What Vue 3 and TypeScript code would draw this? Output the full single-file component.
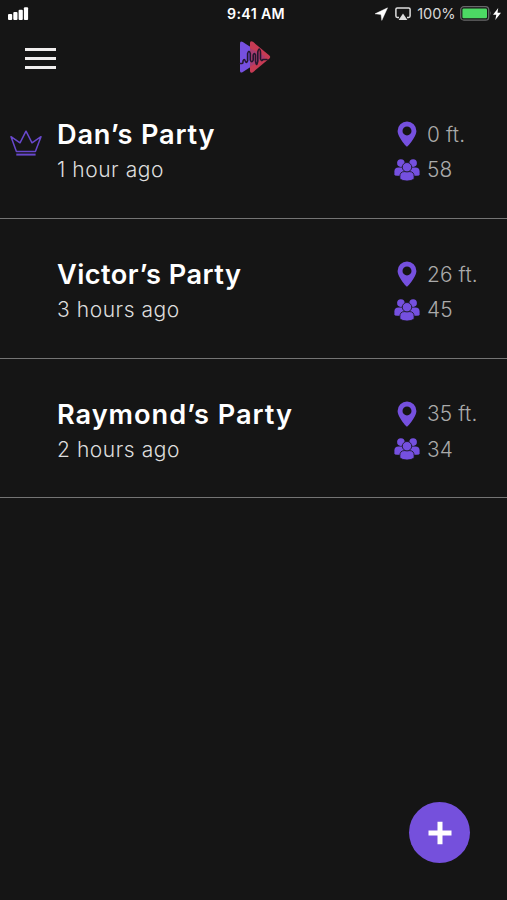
<script setup lang="ts">
interface Party {
  name: string
  age: string
  distance: string
  guests: number
  hosting: boolean
  nameSpacing: number
}

const parties: Party[] = [
  { name: 'Dan’s Party', age: '1 hour ago', distance: '0 ft.', guests: 58, hosting: true, nameSpacing: 0.8 },
  { name: 'Victor’s Party', age: '3 hours ago', distance: '26 ft.', guests: 45, hosting: false, nameSpacing: 0.45 },
  { name: 'Raymond’s Party', age: '2 hours ago', distance: '35 ft.', guests: 34, hosting: false, nameSpacing: 0.95 },
]
</script>

<template>
  <div class="screen">
    <header class="status">
      <svg class="signal" width="22" height="14" viewBox="0 0 22 14" fill="#fff">
        <rect x="0" y="7" width="4.2" height="6" rx="1" />
        <rect x="5.3" y="5" width="4.2" height="8" rx="1" />
        <rect x="10.6" y="2.8" width="4.2" height="10.2" rx="1" />
        <rect x="15.9" y="0.3" width="4.2" height="12.7" rx="1" />
      </svg>
      <span class="clock">9:41 AM</span>
      <div class="indicators">
        <svg width="14" height="14" viewBox="0 0 14 14"><path d="M12.6 .8 L0 6.8 L6 7.6 L6.8 13.4 Z" fill="#fff" stroke="#fff" stroke-width=".4" /></svg>
        <svg class="cast" width="16" height="14" viewBox="0 0 16 14">
          <path d="M4 10.4H2.3Q.9 10.4 .9 9V2.3Q.9.9 2.3.9H13.7Q15.1.9 15.1 2.3V9Q15.1 10.4 13.7 10.4H12" fill="none" stroke="#ddd" stroke-width="1.5" />
          <path d="M8 6.6 L12.4 13 H3.6 Z" fill="#ddd" />
        </svg>
        <span class="percent">100%</span>
        <svg class="battery" width="32" height="15" viewBox="0 0 32 15">
          <rect x=".7" y=".7" width="28" height="13.4" rx="3.2" fill="none" stroke="#68686a" stroke-width="1.3" />
          <rect x="2.4" y="2.5" width="24.6" height="9.8" rx="1.2" fill="#4cd964" />
          <path d="M30.2 5 Q31.8 7.4 30.2 9.8Z" fill="#68686a" />
        </svg>
        <svg class="bolt" width="8" height="12" viewBox="0 0 8 12"><path d="M5.2 0 L0 6.8 H3.3 L2.3 12 L8 4.8 H4.5 Z" fill="#fff" /></svg>
      </div>
    </header>

    <nav class="bar">
      <button class="menu" aria-label="Menu"><i /><i /><i /></button>
      <svg class="logo" width="34" height="36" viewBox="0 0 34 36">
        <path d="M2 4.6 Q2 1.3 4.8 3 L26 16.7 Q28 18 26 19.3 L4.8 33 Q2 34.7 2 31.4Z" fill="#7650e0" />
        <path d="M12 4 Q12 1.2 15 2.8 L31.4 16.5 Q33 18 31.4 19.5 L15 33.2 Q12 34.8 12 32Z" fill="#c63b54" />
        <path d="M12 9.2 L26 16.7 Q28 18 26 19.3 L12 27.8Z" fill="#a83c70" />
        <path d="M2 24.5H4 Q5 24.5 5 23 V22 Q6.3 19 7.3 22 Q8.5 25 9.6 21.8 V14.5 Q11 10 12.3 14.5 V21 Q13.8 24.5 15.2 21 V16 Q16.5 13 17.5 16 V22 Q18.5 29 19.8 22 V13 Q21.3 7 22.5 13 V19.8 Q23.5 23 25 20.5 H29" fill="none" stroke="#24172e" stroke-width="1.6" stroke-linecap="round" />
      </svg>
    </nav>

    <main>
      <section v-for="party in parties" :key="party.name" class="party">
        <div class="badge">
          <svg v-if="party.hosting" width="34" height="28" viewBox="0 0 34 28" fill="none" stroke="#6848cc" stroke-width="1.5" stroke-linejoin="round">
            <path d="M7.4 22.5 L2 7.7 L11 13.8 L17 2.2 L23 13.8 L32 7.7 L26.4 22.5 Z" />
            <path d="M7.3 25.6H26.6" stroke-width="2" />
          </svg>
        </div>
        <div class="info">
          <h2 :style="{ letterSpacing: party.nameSpacing + 'px' }">{{ party.name }}</h2>
          <p>{{ party.age }}</p>
        </div>
        <div class="stats">
          <div class="stat">
            <svg width="26" height="26" viewBox="0 0 26 26">
              <path fill-rule="evenodd" d="M13 25.6 C11.8 25.6 3.6 15.4 3.6 10 A9.4 9.4 0 0 1 22.4 10 C22.4 15.4 14.2 25.6 13 25.6Z M13 5.4 A4.5 4.5 0 1 0 13 14.4 A4.5 4.5 0 1 0 13 5.4Z" fill="#7550df" />
            </svg>
            <span>{{ party.distance }}</span>
          </div>
          <div class="stat">
            <svg width="26" height="22" viewBox="0 0 26 22">
              <g fill="#7550df">
                <circle cx="6.9" cy="4.1" r="3.8" /><circle cx="19.1" cy="4.1" r="3.8" />
                <path d="M.4 15.5V12.5Q.4 8.4 4.5 8.4H8Q11 8.8 11 12V16.7H3Q.4 16.7.4 15.5Z" />
                <path d="M25.6 15.5V12.5Q25.6 8.4 21.5 8.4H18Q15 8.8 15 12V16.7H23Q25.6 16.7 25.6 15.5Z" />
              </g>
              <g fill="#7550df" stroke="#151515" stroke-width="0.8">
                <path d="M5.9 17.5Q5.9 12.6 10.4 12.6H15.6Q20.1 12.6 20.1 17.5V20Q17.5 22 13 22T5.9 20Z" />
                <circle cx="13" cy="8.2" r="4.7" />
              </g>
            </svg>
            <span>{{ party.guests }}</span>
          </div>
        </div>
      </section>
    </main>

    <footer class="actions">
      <button class="add" aria-label="Add party">
        <svg width="24" height="24" viewBox="0 0 24 24"><path d="M12 .8V23.2M.5 12H23.5" stroke="#fff" stroke-width="5" /></svg>
      </button>
    </footer>
  </div>
</template>

<style>
body { background: #151515; }
</style>

<style scoped>
.screen {
  display: flex;
  flex-direction: column;
  box-sizing: border-box;
  width: 507px;
  height: 900px;
  overflow: hidden;
  background: #151515;
  color: #fff;
  font-family: Inter, "Liberation Sans", sans-serif;
}
svg { display: block; flex: none; }
.status {
  display: grid;
  grid-template-columns: 1fr auto 1fr;
  align-items: center;
  height: 28px;
  padding: 0 6px 0 8px;
}
.signal { margin-top: -1px; }
.clock { margin-left: 3px; font-size: 14.2px; font-weight: 600; letter-spacing: .35px; line-height: 28px; }
.indicators { display: flex; align-items: center; justify-content: flex-end; }
.cast { margin-left: 6px; }
.percent { margin-left: 6px; font-size: 14.6px; color: #d8d8d8; letter-spacing: -.1px; }
.battery { margin: -1px 0 0 4px; }
.bolt { margin: -1px 0 0 1.5px; }
.bar {
  display: grid;
  grid-template-columns: 1fr auto 1fr;
  align-items: center;
  height: 51px;
  padding: 0 25px;
}
button { border: 0; padding: 0; background: none; }
.menu { display: flex; flex-direction: column; gap: 6px; width: 31px; margin-top: 9px; }
.menu i { height: 3px; background: #f0eeee; }
.logo { margin: 7px 0 0 3.5px; }
.party {
  display: grid;
  grid-template-columns: 57px 1fr 113px;
  box-sizing: border-box;
  height: 139.8px;
  border-bottom: 1px solid #747474;
}
.badge { padding: 50px 0 0 9px; }
.info { padding-top: 39px; }
h2 { margin: 0; font-size: 27.2px; font-weight: 600; line-height: 34px; white-space: nowrap; }
p { margin: 0; font-size: 21px; font-weight: 300; letter-spacing: .55px; line-height: 35px; color: #ddd; white-space: nowrap; }
.stats { padding-top: 37.6px; }
.stat { display: flex; align-items: center; gap: 7px; height: 35.5px; font-size: 20.8px; font-weight: 300; letter-spacing: .15px; color: #aaa; }
.stat span { white-space: nowrap; }
.actions { display: flex; justify-content: flex-end; margin-top: auto; padding: 0 37px 37px 0; }
.add {
  display: flex;
  align-items: center;
  justify-content: center;
  width: 61px;
  height: 61px;
  border-radius: 50%;
  background: #7550dc;
}
</style>
